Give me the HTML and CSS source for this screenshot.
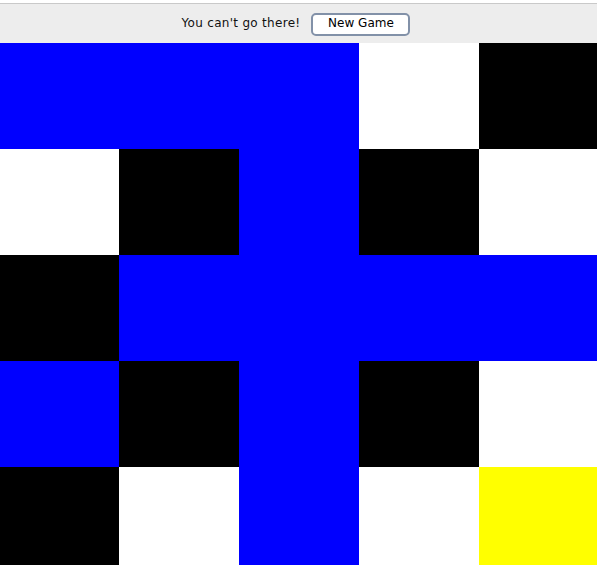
FILE: index.html
```html
<!DOCTYPE html>
<html>
<head>
<meta charset="utf-8">
<link rel="stylesheet" href="styles.css">
</head>
<body>
<div class="top-gap"></div>
<div class="toolbar">
  <span class="status">You can't go there!</span>
  <button class="new-game">New Game</button>
</div>
<div class="board">
  <div class="cell blue"></div><div class="cell blue"></div><div class="cell blue"></div><div class="cell white"></div><div class="cell black"></div>
  <div class="cell white"></div><div class="cell black"></div><div class="cell blue"></div><div class="cell black"></div><div class="cell white"></div>
  <div class="cell black"></div><div class="cell blue"></div><div class="cell blue"></div><div class="cell blue"></div><div class="cell blue"></div>
  <div class="cell blue"></div><div class="cell black"></div><div class="cell blue"></div><div class="cell black"></div><div class="cell white"></div>
  <div class="cell black"></div><div class="cell white"></div><div class="cell blue"></div><div class="cell white"></div><div class="cell yellow"></div>
</div>
</body>
</html>
```
FILE: styles.css
```css
html, body {
  margin: 0;
  padding: 0;
  background: #ffffff;
  overflow: hidden;
}
.top-gap {
  height: 3px;
  background: #ffffff;
  border-bottom: 1px solid #c9c9c9;
}
.toolbar {
  height: 39px;
  background: #ededed;
  display: flex;
  align-items: center;
  justify-content: center;
  gap: 11px;
  padding-right: 5px;
  font-family: "DejaVu Sans", sans-serif;
  font-size: 12px;
  color: #111111;
}
.status {
  letter-spacing: 0.3px;
  margin-top: -1px;
}
.new-game {
  width: 99px;
  height: 23px;
  margin-top: 1px;
  background: #ffffff;
  border: 2px solid #8291a8;
  border-radius: 5px;
  font-family: "DejaVu Sans", sans-serif;
  font-size: 12px;
  color: #000000;
  padding: 0 0 2px 0;
}
.board {
  display: grid;
  grid-template-columns: 119px 120px 120px 120px 1fr;
  grid-auto-rows: 106px;
}
.cell.blue { background: #0000ff; }
.cell.white { background: #ffffff; }
.cell.black { background: #000000; }
.cell.yellow { background: #ffff00; }
```
